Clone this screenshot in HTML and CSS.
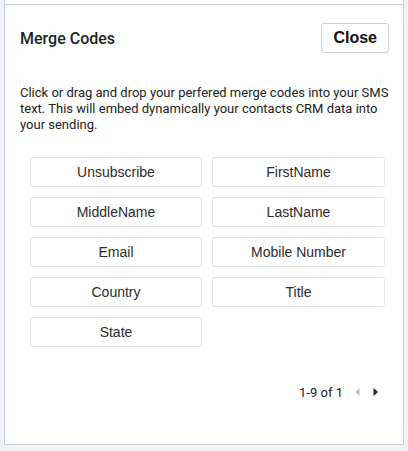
FILE: index.html
```html
<!DOCTYPE html>
<html>
<head>
<meta charset="utf-8">
<link rel="stylesheet" href="styles.css">
</head>
<body>
<div class="panel">
  <div class="top-strip"></div>
  <div class="header">
    <h2 class="title">Merge Codes</h2>
    <button class="close-btn">Close</button>
  </div>
  <p class="desc">Click or drag and drop your perfered merge codes into your SMS text. This will embed dynamically your contacts CRM data into your sending.</p>
  <div class="codes">
    <div class="code">Unsubscribe</div>
    <div class="code">FirstName</div>
    <div class="code">MiddleName</div>
    <div class="code">LastName</div>
    <div class="code">Email</div>
    <div class="code">Mobile Number</div>
    <div class="code">Country</div>
    <div class="code">Title</div>
    <div class="code">State</div>
  </div>
  <div class="pager">
    <span class="pager-text">1-9 of 1</span>
    <svg class="arrow" width="6" height="10" viewBox="0 0 6 10"><path d="M5.5 1 L1 5 L5.5 9 Z" fill="#c4c4c4"/></svg>
    <svg class="arrow" width="6" height="10" viewBox="0 0 6 10"><path d="M0.5 1 L5 5 L0.5 9 Z" fill="#1f2329"/></svg>
  </div>
</div>
</body>
</html>
```
FILE: styles.css
```css
html, body {
  margin: 0;
  padding: 0;
}
body {
  background: #f0f4f9;
  width: 408px;
  height: 451px;
  overflow: hidden;
}
.panel {
  margin-left: 4px;
  width: 398px;
  height: 444px;
  background: #ffffff;
  border-left: 1px solid #c9ced4;
  border-right: 1px solid #c9ced4;
  border-bottom: 1px solid #c9ced4;
  display: flex;
  flex-direction: column;
}
.top-strip {
  height: 4px;
  border-bottom: 1px solid #c9ced4;
}
.header {
  display: flex;
  justify-content: space-between;
  align-items: center;
  padding: 18px 14px 0 15px;
}
.title {
  margin: 0;
  font-family: Roboto, "Liberation Sans", sans-serif;
  font-weight: 500;
  font-size: 16px;
  color: #1d1f22;
}
.close-btn {
  height: 30px;
  padding: 0 11px;
  background: #ffffff;
  border: 1px solid #cfcfcf;
  border-radius: 3px;
  font-family: "Liberation Sans", Arial, sans-serif;
  font-weight: bold;
  font-size: 16px;
  color: #111;
}
.desc {
  margin: 32px 8px 0 15px;
  font-family: Roboto, "Liberation Sans", sans-serif;
  font-size: 13px;
  line-height: 16px;
  color: #222;
}
.codes {
  margin: 24px 0 0 25px;
  width: 355px;
  display: grid;
  grid-template-columns: 172px 173px;
  column-gap: 10px;
  row-gap: 10px;
}
.code {
  box-sizing: border-box;
  height: 30px;
  border: 1px solid #e2e2e2;
  border-radius: 3px;
  display: flex;
  align-items: center;
  justify-content: center;
  font-family: "Liberation Sans", Arial, sans-serif;
  font-size: 14px;
  color: #2b2b2b;
}
.pager {
  margin-top: 35px;
  height: 20px;
  display: flex;
  align-items: center;
  justify-content: flex-end;
  padding-right: 24px;
}
.pager-text {
  font-family: Roboto, "Liberation Sans", sans-serif;
  font-size: 13px;
  color: #222;
  margin-right: 11px;
}
.arrow {
  display: block;
  margin-right: 13px;
}
.arrow:last-child {
  margin-right: 0;
}
```
